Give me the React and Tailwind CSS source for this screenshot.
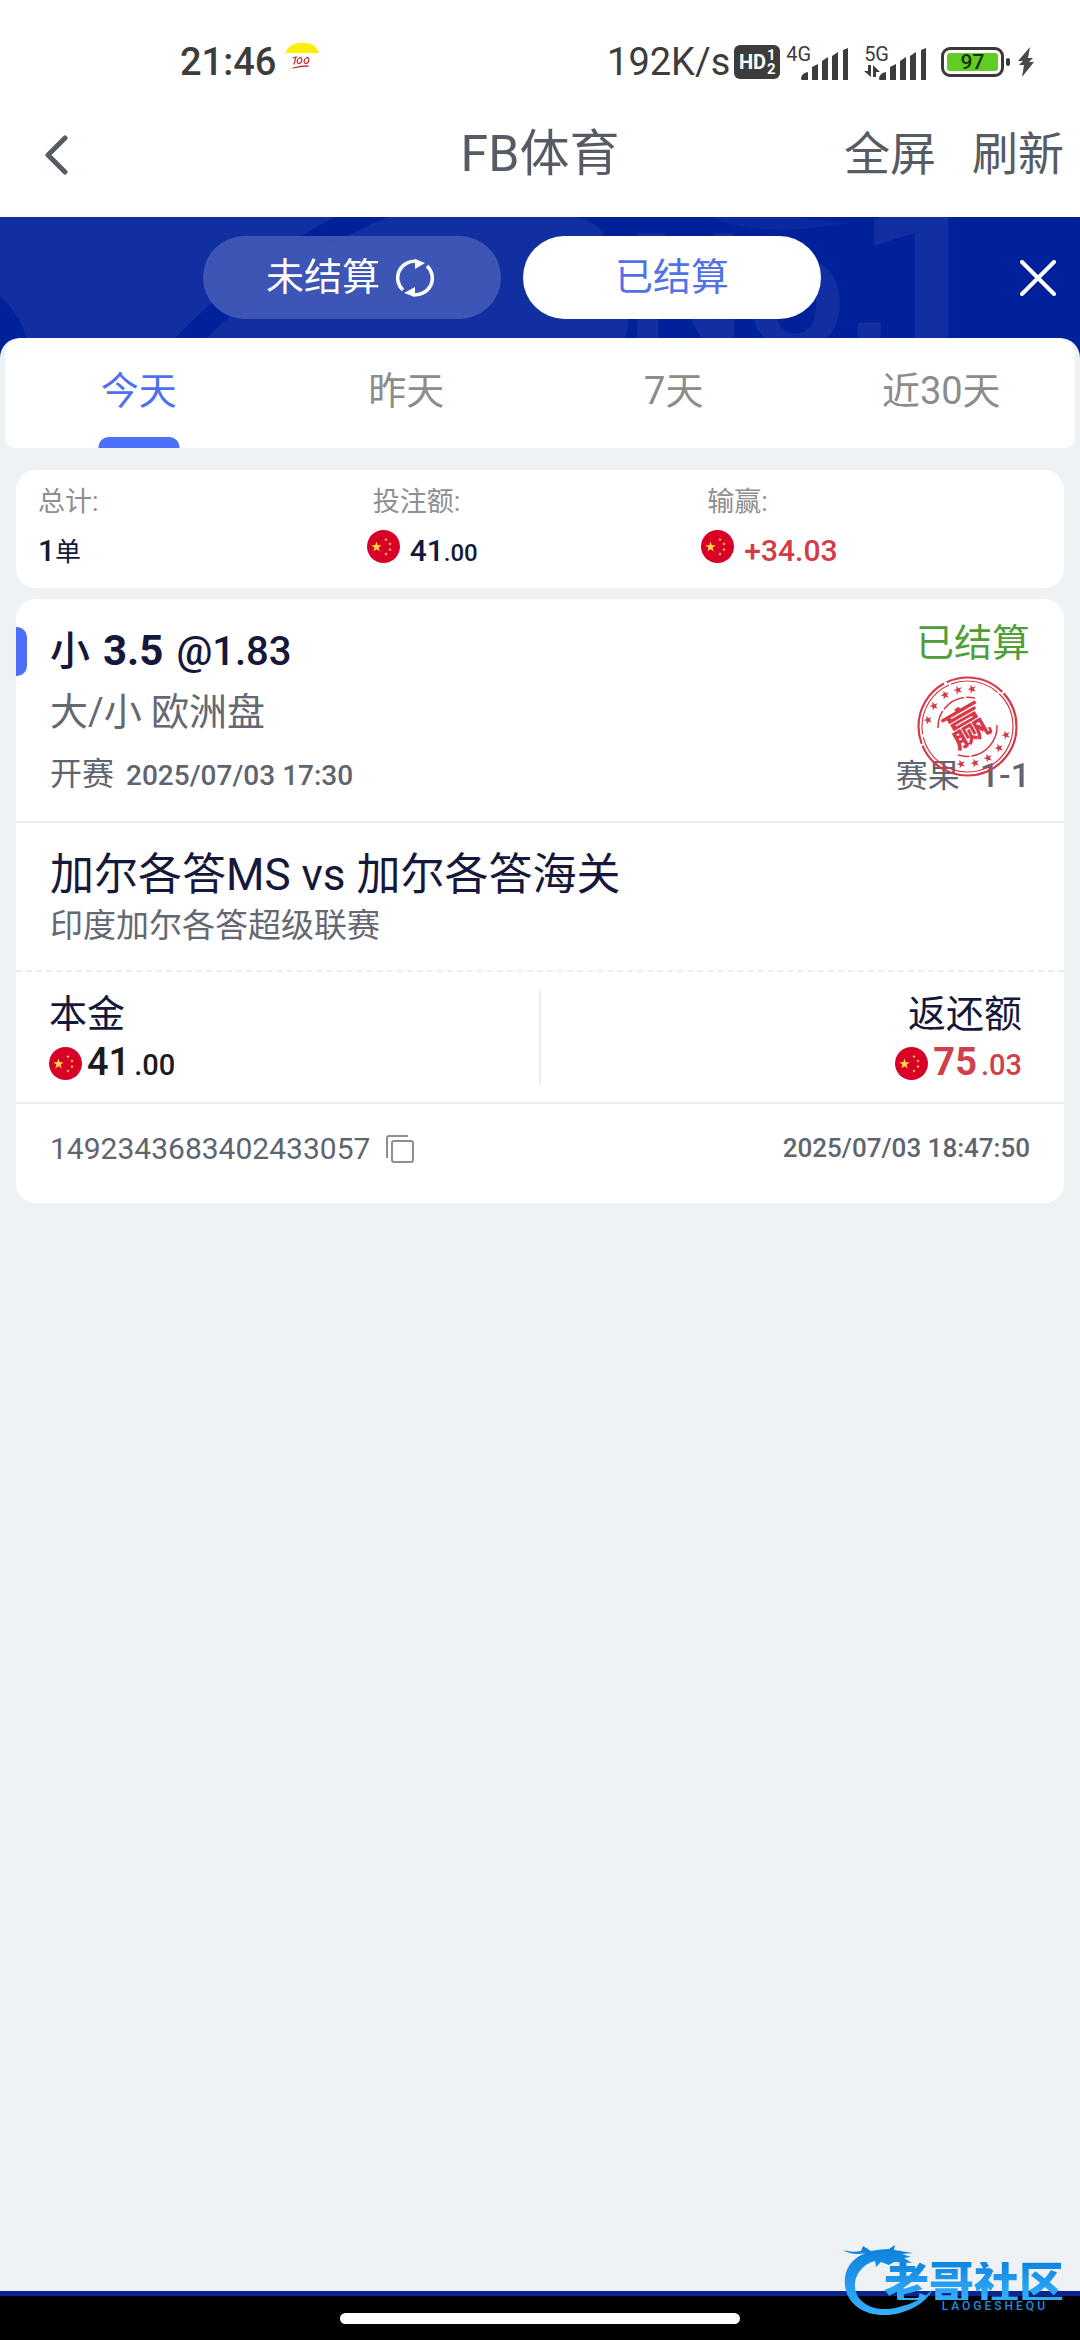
const ROBOTO = 'font-["Roboto","Noto_Sans_CJK_SC",sans-serif]';

const STAR = "M0,-10 L2.4,-3.2 9.5,-3.1 3.8,1.2 5.9,8.1 0,4 -5.9,8.1 -3.8,1.2 -9.5,-3.1 -2.4,-3.2Z";

function Flag() {
  return (
    <svg viewBox="0 0 33 33" className="size-[33px] shrink-0" role="img" aria-label="CNY">
      <circle cx="16.5" cy="16.5" r="16.5" fill="#d80027" />
      <path d={STAR} transform="translate(9.5 17) scale(.54)" fill="#ffda44" />
      {[[19, 9.5], [23, 14], [23, 19.5], [19, 24]].map(([x, y]) => (
        <path key={y} d={STAR} transform={`translate(${x} ${y}) scale(.19)`} fill="#ffda44" />
      ))}
    </svg>
  );
}

function Signal() {
  return (
    <svg viewBox="0 0 48 32" className="h-8 w-12" fill="#3c3c3c" aria-hidden="true">
      <path d="M0 30q0 2 1 2h6V24q-6 1-7 6zM11 19l6-3v16h-6zM21 13l6-4v23h-6zM31 8l6-4v28h-6zM42 2l5-2v32h-5z" />
    </svg>
  );
}

function StatusBar() {
  return (
    <div className="flex h-[92px] items-end justify-between pr-[46px] pl-[180px] text-[38px] leading-[46px] text-[#3c3c3c]">
      <div className="flex h-[60px] items-center gap-[9px]">
        <span className="font-medium">21:46</span>
        <svg viewBox="0 0 34 30" className="mb-2 h-[30px] w-[34px]" aria-hidden="true">
          <path d="M0 10Q5 0 14 0H22Q31 1 34 10Z" fill="#fdee0a" />
          <g fill="none" stroke="#c43236" strokeWidth="1.3" strokeLinecap="round">
            <path d="M8 15l3-1-2 7M15 14.500c-3 1-4 6-1 6s4-6 1-6zM22 14.500c-3 1-4 6-1 6s4-6 1-6zM8 25q7-2 15-2" />
          </g>
        </svg>
      </div>
      <div className="flex h-[60px] items-center">
        <span>192K/s</span>
        <span className="ml-1 flex h-[34px] w-[46px] items-center justify-center gap-px rounded-md bg-[#3c3c3c] font-bold text-white">
          <span className="text-[20px] leading-6">HD</span>
          <span className="flex flex-col text-[15px] leading-[14px]"><span>1</span><span>2</span></span>
        </span>
        <span className="ml-[6px] flex h-9 items-start">
          <span className="-mr-[10px] text-[20px] leading-5">4G</span>
          <span className="pt-1"><Signal /></span>
        </span>
        <span className="ml-[15px] flex h-9 items-start">
          <span className="-mr-[10px] flex flex-col text-[20px] leading-5">5G
            <svg viewBox="0 0 16 12" className="mt-px h-3 w-4" fill="#3c3c3c" aria-hidden="true"><path d="M4 0h3v12L0 6h4zM9 0l7 7h-4v5H9z" /></svg>
          </span>
          <span className="pt-1"><Signal /></span>
        </span>
        <span className="ml-[14px] flex h-[30px] w-[63px] rounded-[9px] border-[3px] border-[#3c3838] p-[3px]">
          <span className="flex flex-1 items-center justify-center rounded-[3px] bg-[#62cb24] text-[21px] leading-5 font-medium text-[#16330a]">97</span>
        </span>
        <span className="ml-[2px] h-2 w-1 rounded-sm bg-[#3c3c3c]" />
        <svg viewBox="0 0 16 30" className="ml-[8px] h-[30px] w-4" fill="#4a4a4a" aria-hidden="true"><path d="M12 0L0 14h5L1 18h5L4 30 16 15h-5l4-4h-5z" /></svg>
      </div>
    </div>
  );
}

function Header() {
  return (
    <header className="grid h-[125px] grid-cols-[1fr_auto_1fr] items-center px-4 text-[46px] text-[#565b64]">
      <button aria-label="返回" className="w-fit pl-[26px]">
        <svg viewBox="0 0 28 40" className="h-10 w-7" fill="none" stroke="#565b64" strokeWidth="5" strokeLinecap="round" strokeLinejoin="round"><path d="M23 3L6 20l17 17" /></svg>
      </button>
      <h1 className="text-[50px]">FB体育</h1>
      <div className="flex justify-end gap-9">
        <button>全屏</button>
        <button>刷新</button>
      </div>
    </header>
  );
}

function Banner() {
  return (
    <div className="relative flex h-[121px] items-center justify-center gap-[22px] overflow-hidden bg-[#01219a] pr-14 text-[38px]">
      <svg viewBox="0 0 1080 121" preserveAspectRatio="none" className="absolute inset-0 size-full" fill="#122fa1" aria-hidden="true">
        <path d="M0 0H335Q250 45 175 121H27Q15 90 0 80Z" />
        <path d="M388 0H575Q606 6 608 32C606 60 640 70 625 121H207Q290 40 388 0Z" />
        <path d="M710 0Q760 22 850 6Q815 3 800 0Z" opacity=".6" />
      </svg>
      <span aria-hidden="true" className='absolute top-2 right-[188px] font-["Liberation_Sans",sans-serif] text-[165px] leading-[130px] font-bold text-[#122fa1]'>No.</span>
      <span aria-hidden="true" className="absolute -top-[44px] right-[88px] text-[240px] leading-[220px] font-bold text-[#122fa1]">1</span>
      <button className="relative flex h-[83px] w-[298px] items-center justify-center gap-4 rounded-full bg-[#435ab6]/90 pr-1 text-white">
        未结算
        <svg viewBox="0 0 38 38" className="size-[38px]" aria-hidden="true">
          <g fill="none" stroke="#fff" strokeWidth="3.500"><path d="M7 31A16.500 16.500 0 0 1 22 2.800" /><path d="M31 7A16.500 16.500 0 0 1 16 35.200" /></g>
          <path d="M19 0l10 4-10 6zM19 38l-11-4 11-6z" fill="#fff" />
        </svg>
      </button>
      <button className="relative h-[83px] w-[298px] rounded-full bg-white text-[#5271e6]">已结算</button>
      <button aria-label="关闭" className="absolute top-[43px] right-[24px]">
        <svg viewBox="0 0 36 36" className="size-9" stroke="#fff" strokeWidth="4" strokeLinecap="round"><path d="M2 2l32 32M34 2L2 34" /></svg>
      </button>
    </div>
  );
}

function Tabs() {
  return (
    <div className="bg-[#01219a]">
      <div className="rounded-t-[20px] bg-[#eef2f5] px-[5px]">
        <nav className="grid h-[110px] grid-cols-4 rounded-t-[18px] rounded-b-[10px] bg-white text-[38px] text-[#8c8c8c]">
          {["今天", "昨天", "7天", "近30天"].map((t, i) => (
            <button key={t} className={i === 0 ? "relative pb-1 text-[#4e6ff0]" : "pb-1"}>
              {t}
              {i === 0 && <span className="absolute bottom-0 left-1/2 h-[11px] w-[81px] -translate-x-1/2 rounded-t-[10px] bg-[#4d70fb]" />}
            </button>
          ))}
        </nav>
      </div>
    </div>
  );
}

function Summary() {
  return (
    <section className="grid h-[118px] grid-cols-3 rounded-[20px] bg-white px-[22px] pt-[14px] text-[30px] font-medium text-[#15183a]">
      <div>
        <div className="text-[27px] leading-9 font-normal text-[#8f8f8f]">总计:</div>
        <div className="mt-[10px] leading-[42px]">1<span className="text-[26px] font-normal">单</span></div>
      </div>
      <div>
        <div className="text-[27px] leading-9 font-normal text-[#8f8f8f]">投注额:</div>
        <div className="mt-[10px] -ml-[6px] flex items-start gap-[10px] leading-[42px]"><Flag /><span>41<span className="text-[24px]">.00</span></span></div>
      </div>
      <div>
        <div className="text-[27px] leading-9 font-normal text-[#8f8f8f]">输赢:</div>
        <div className="mt-[10px] -ml-[6px] flex items-start gap-[10px] leading-[42px]"><Flag /><span className="text-[#d53a48]">+34.03</span></div>
      </div>
    </section>
  );
}

function Stamp() {
  const stars = [[11, 44], [17, 30], [28, 19], [41, 14], [55, 13], [89, 59], [82, 72], [71, 82], [58, 87], [44, 88]];
  return (
    <svg viewBox="0 0 101 101" className="absolute top-[77px] right-[46px] size-[101px]" role="img" aria-label="赢">
      <g fill="none" stroke="#d63a4a">
        <circle cx="50.500" cy="50.500" r="49" strokeWidth="2.200" strokeDasharray="92 2 40 2 70 3 60 2" />
        <circle cx="50.500" cy="50.500" r="45.500" strokeWidth="1.200" strokeDasharray="50 2 80 3 60 2" />
        <path d="M21 52A30 30 0 0 1 58 22" strokeWidth="1.500" strokeDasharray="18 2 24 2" />
        <path d="M80 49A30 30 0 0 1 41 79" strokeWidth="1.500" strokeDasharray="44 2" />
      </g>
      {stars.map(([x, y]) => <path key={x} d={STAR} transform={`translate(${x} ${y}) rotate(-20) scale(.46)`} fill="#d63a4a" />)}
      <text x="50" y="65" textAnchor="middle" transform="rotate(-30 50 50)" className='font-["Noto_Sans_CJK_SC",sans-serif] text-[42px] font-bold' fill="#d63a4a">赢</text>
    </svg>
  );
}

function Bet() {
  return (
    <article className="rounded-[20px] bg-white text-[#15183a]">
      <div className="relative flex h-[222px] justify-between px-[34px]">
        <span className="absolute top-7 left-0 h-[49px] w-[11px] rounded-r-[10px] bg-[#4d70fb]" />
        <div className="pt-6">
          <h2 className="flex items-baseline gap-[13px] text-[40px] leading-[56px] font-medium"><span>小</span><strong className="text-[42px]">3.5</strong><span>@1.83</span></h2>
          <p className="mt-1 text-[38px] leading-[56px] text-[#646872]">大/小 欧洲盘</p>
          <p className="mt-[6px] flex items-baseline gap-3 text-[32px] leading-[56px] text-[#5f6570]">开赛<span className="text-[28px] font-medium">2025/07/03 17:30</span></p>
        </div>
        <div className="pt-4 text-right">
          <p className="text-[38px] leading-[56px] text-[#4f9e38]">已结算</p>
          <p className="mt-[76px] flex items-baseline justify-end gap-5 text-[32px] leading-[56px] text-[#5f6570]">赛果<span className="text-[34px] font-medium">1-1</span></p>
        </div>
        <Stamp />
      </div>
      <div className="h-[149px] border-t-2 border-[#ebedee] px-[34px] pt-6">
        <h3 className="text-[44px] leading-[56px]">加尔各答MS vs 加尔各答海关</h3>
        <p className="text-[33px] leading-[46px] text-[#646872]">印度加尔各答超级联赛</p>
      </div>
      <div className="grid h-[132px] grid-cols-[1fr_2px_1fr] items-center border-t-2 border-dashed border-[#ebedee] pt-[2px]">
        <div className="pl-[33px]">
          <div className="text-[38px] leading-[50px]">本金</div>
          <div className="flex items-center gap-[5px] leading-[46px] font-medium text-[#1c1c1c]"><Flag /><span className="flex items-baseline gap-1"><span className="text-[38px]">41</span><span className="text-[29px]">.00</span></span></div>
        </div>
        <div className="h-[95px] bg-[#ebedee]" />
        <div className="flex flex-col items-end pr-[42px]">
          <div className="text-[38px] leading-[50px]">返还额</div>
          <div className="flex items-center gap-[5px] leading-[46px] font-medium text-[#d0404c]"><Flag /><span className="flex items-baseline gap-1"><span className="text-[38px] font-bold">75</span><span className="text-[29px]">.03</span></span></div>
        </div>
      </div>
      <footer className="flex h-[101px] items-center justify-between border-t-2 border-[#ebedee] px-[34px] pb-[10px] text-[30px] text-[#5f6570]">
        <div className="flex items-center gap-4">
          1492343683402433057
          <button aria-label="复制">
            <svg viewBox="0 0 28 28" className="block size-7" fill="none" stroke="#8c8f94" strokeWidth="2"><path d="M1 23V3q0-2 2-2h19" /><rect x="6" y="6" width="21" height="21" rx="2" /></svg>
          </button>
        </div>
        <time className="text-[26px] font-medium">2025/07/03 18:47:50</time>
      </footer>
    </article>
  );
}

function Watermark() {
  return (
    <div className="absolute right-[16px] bottom-[24px] flex h-[72px] w-[222px] justify-end" aria-label="老哥社区">
      <svg viewBox="0 0 222 72" className="absolute inset-0 size-full" aria-hidden="true">
        <defs><linearGradient id="wm" x1="0" y1="0" x2="0" y2="1"><stop offset="0" stopColor="#0b7fdb" /><stop offset="1" stopColor="#35b0fb" /></linearGradient></defs>
        <path d="M1 6q9 3 18 1l2-5 8 5q10-2 18-2l6-4-1 5 19 3-11 1 9 3-7 1 8 5-18-1-5 3-8-3-5 5-1-6C14 22 8 42 17 54c9 12 27 13 40 9q22-5 34-18-8 16-30 23C34 77 6 66 3 42 1 24 12 13 24 9Q10 12 1 6Z" fill="url(#wm)" />
      </svg>
      <div className="relative pt-[18px]">
        <div className='bg-linear-to-b from-[#0d84e0] to-[#35b0fb] bg-clip-text font-["Noto_Sans_CJK_SC",sans-serif] text-[45px] leading-[38px] font-black text-transparent'>老哥社区</div>
        <div className="pr-4 text-right text-[12px] leading-3 font-medium tracking-[3px] text-[#1c8be0]">LAOGESHEQU</div>
      </div>
    </div>
  );
}

export default function App() {
  return (
    <div className={ROBOTO + " relative flex min-h-screen flex-col bg-[#eef2f5]"}>
      <div className="bg-white">
        <StatusBar />
        <Header />
      </div>
      <Banner />
      <Tabs />
      <main className="flex flex-1 flex-col gap-[11px] px-4 pt-[22px]">
        <Summary />
        <Bet />
      </main>
      <div className="flex h-[49px] justify-center border-t-[5px] border-[#0c2490] bg-black pt-[17px]">
        <div className="h-[11px] w-[400px] rounded-full bg-white" />
      </div>
      <Watermark />
    </div>
  );
}
